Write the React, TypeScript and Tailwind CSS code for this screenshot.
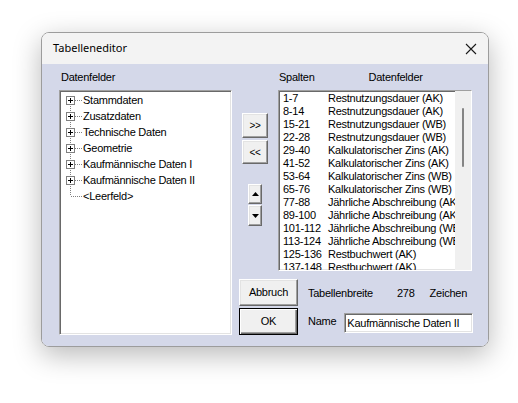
import * as React from 'react';

const rows: Array<[string, string]> = [
  ['1-7', 'Restnutzungsdauer (AK)'],
  ['8-14', 'Restnutzungsdauer (AK)'],
  ['15-21', 'Restnutzungsdauer (WB)'],
  ['22-28', 'Restnutzungsdauer (WB)'],
  ['29-40', 'Kalkulatorischer Zins (AK)'],
  ['41-52', 'Kalkulatorischer Zins (AK)'],
  ['53-64', 'Kalkulatorischer Zins (WB)'],
  ['65-76', 'Kalkulatorischer Zins (WB)'],
  ['77-88', 'Jährliche Abschreibung (AK)'],
  ['89-100', 'Jährliche Abschreibung (AK)'],
  ['101-112', 'Jährliche Abschreibung (WB)'],
  ['113-124', 'Jährliche Abschreibung (WB)'],
  ['125-136', 'Restbuchwert (AK)'],
  ['137-148', 'Restbuchwert (AK)'],
];

const tree = [
  'Stammdaten',
  'Zusatzdaten',
  'Technische Daten',
  'Geometrie',
  'Kaufmännische Daten I',
  'Kaufmännische Daten II',
];

const sunken =
  'border border-t-[#a0a0a0] border-l-[#a0a0a0] border-b-white border-r-white shadow-[inset_1px_1px_0_#696969,inset_-1px_-1px_0_#e3e3e3]';
const raised =
  'bg-[#f0f0f0] border border-t-white border-l-white border-b-[#696969] border-r-[#696969] shadow-[inset_-1px_-1px_0_#a0a0a0,inset_1px_1px_0_#e3e3e3]';

function TreeRow({ label, first, last, leaf }: { label: string; first?: boolean; last?: boolean; leaf?: boolean }) {
  return (
    <div className="flex h-[16px] items-center">
      <svg width="18" height="16" className="shrink-0" shapeRendering="crispEdges">
        <line
          x1="4.5"
          x2="4.5"
          y1={first ? 8 : 0}
          y2={last ? 8 : 16}
          stroke="#808080"
          strokeDasharray="1 1"
        />
        <line x1="5" x2="17" y1="8.5" y2="8.5" stroke="#808080" strokeDasharray="1 1" />
        {!leaf && (
          <>
            <rect x="0.5" y="4.5" width="8" height="8" fill="#fff" stroke="#808080" />
            <line x1="2" x2="7" y1="8.5" y2="8.5" stroke="#000" />
            <line x1="4.5" x2="4.5" y1="6" y2="11" stroke="#000" />
          </>
        )}
      </svg>
      <span className="ml-[-1px]">{label}</span>
    </div>
  );
}

export default function App() {
  return (
    <div className="min-h-screen w-full bg-white pl-[41px] pt-[32px]" style={{ fontFamily: '"Liberation Sans", Arial, sans-serif' }}>
      <div className="flex h-[315px] w-[448px] flex-col overflow-hidden rounded-[8px] border border-[#9c9c9c] shadow-[0_8px_28px_rgba(0,0,0,0.28)]">
        {/* title bar */}
        <div className="flex h-[31px] shrink-0 items-center justify-between bg-[#f3f3f3] pl-[11px] pr-[9px]">
          <span className="text-[11px] text-black" style={{ fontFamily: '"Noto Sans", "Open Sans", sans-serif' }}>
            Tabelleneditor
          </span>
          <svg width="12" height="12" viewBox="0 0 12 12" className="mr-[2px]">
            <path d="M1 1L11 11M11 1L1 11" stroke="#1a1a1a" strokeWidth="1.1" />
          </svg>
        </div>

        {/* body */}
        <div className="flex flex-1 gap-[7px] bg-[#d4d8e9] pl-[17px] pr-[15px] pt-[7px] text-[11px] leading-[13px] tracking-[-0.25px] text-black">
          {/* left column */}
          <div className="flex w-[173px] flex-col">
            <div className="h-[13px] pl-[2px]">Datenfelder</div>
            <div className={`mt-[6px] h-[245px] bg-white pl-[6px] pt-[1px] ${sunken}`}>
              {tree.map((t, i) => (
                <TreeRow key={t} label={t} first={i === 0} />
              ))}
              <TreeRow label="<Leerfeld>" last leaf />
            </div>
          </div>

          {/* right section */}
          <div className="flex flex-1 flex-col">
            <div className="flex h-[13px]">
              <span className="ml-[40px]">Spalten</span>
              <span className="ml-[54px]">Datenfelder</span>
            </div>
            <div className="mt-[6px] flex">
              <div className="flex w-[39px] flex-col items-start pl-[3px] pt-[23px]">
                <button className={`flex h-[25px] w-[26px] items-center justify-center text-[10px] ${raised}`}>&gt;&gt;</button>
                <button className={`mt-[2px] flex h-[24px] w-[26px] items-center justify-center text-[10px] ${raised}`}>&lt;&lt;</button>
                <div className="ml-[6px] mt-[20px] flex flex-col">
                  <button className={`flex h-[20px] w-[14px] items-center justify-center ${raised}`}>
                    <svg width="7" height="4" viewBox="0 0 7 4"><path d="M3.5 0L7 4H0Z" fill="#000" /></svg>
                  </button>
                  <button className={`mt-[1px] flex h-[21px] w-[14px] items-center justify-center ${raised}`}>
                    <svg width="7" height="4" viewBox="0 0 7 4"><path d="M0 0H7L3.5 4Z" fill="#000" /></svg>
                  </button>
                </div>
              </div>
              <div className={`flex h-[181px] w-[194px] overflow-hidden bg-white ${sunken}`}>
                <div className="flex-1 overflow-hidden pl-[4px] pt-[1px]">
                  {rows.map(([a, b], i) => (
                    <div key={i} className="flex h-[13px] whitespace-nowrap">
                      <span className="w-[45px] shrink-0">{a}</span>
                      <span>{b}</span>
                    </div>
                  ))}
                </div>
                <div className="flex w-[16px] shrink-0 justify-center bg-[#f0f0f0] pt-[17px]">
                  <div className="h-[59px] w-[2px] rounded-full bg-[#858585]" />
                </div>
              </div>
            </div>
            <div className="mt-[8px] flex">
              <div className="flex w-[59px] flex-col gap-[2px]">
                <button className={`h-[27px] w-[59px] text-[11px] ${raised}`}>Abbruch</button>
                <button className="h-[27px] w-[59px] border border-black bg-[#f0f0f0] text-[11px] shadow-[inset_1px_1px_0_#fff,inset_-1px_-1px_0_#696969,inset_-2px_-2px_0_#a0a0a0]">OK</button>
              </div>
              <div className="ml-[10px] flex flex-1 flex-col">
                <div className="flex h-[29px] items-center">
                  <span>Tabellenbreite</span>
                  <span className="ml-[24px]">278</span>
                  <span className="ml-[15px]">Zeichen</span>
                </div>
                <div className="flex items-center pt-[5px]">
                  <span className="mt-[-4px]">Name</span>
                  <div className={`ml-[8px] flex h-[20px] flex-1 items-center bg-white pl-[2px] ${sunken}`}>
                    Kaufmännische Daten II
                  </div>
                </div>
              </div>
            </div>
          </div>
        </div>
      </div>
    </div>
  );
}
